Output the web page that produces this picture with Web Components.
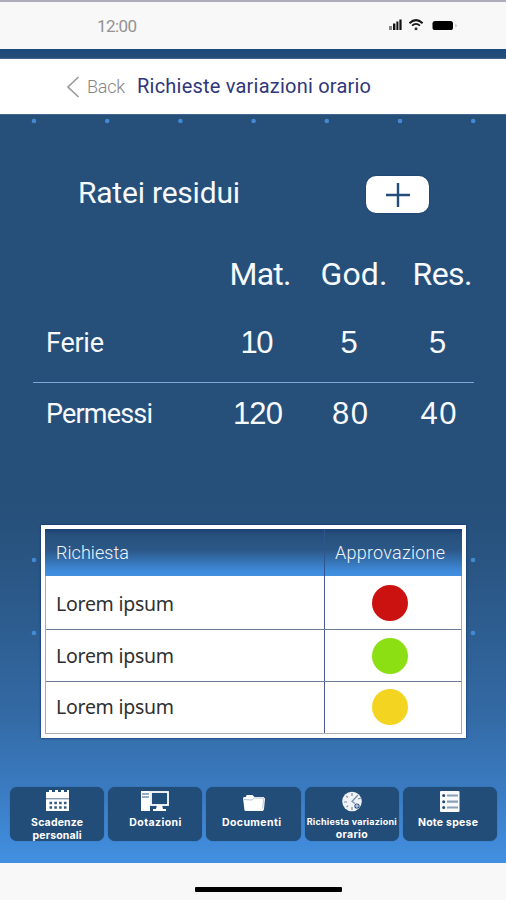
<!DOCTYPE html>
<html lang="it">
<head>
<meta charset="utf-8">
<title>Richieste variazioni orario</title>
<style>
html,body{margin:0;padding:0;width:506px;height:900px;overflow:hidden;background:#f8f8f8}
</style>
</head>
<body>
<hr-app></hr-app>
<script>
const define = (name, html, setup) => customElements.define(name, class extends HTMLElement {
  connectedCallback() {
    if (this.shadowRoot) return;
    const t = document.createElement('template');
    t.innerHTML = html;
    this.attachShadow({mode: 'open'}).appendChild(t.content.cloneNode(true));
    if (setup) setup(this, this.shadowRoot);
  }
});

// Text whose tracking is adjusted so that it spans the width given in "w".
define('fit-text', `
<style>:host{display:block;width:max-content;white-space:nowrap}span{display:inline-block}</style>
<span><slot></slot></span>`, (el, root) => {
  const span = root.querySelector('span');
  const w = Number(el.getAttribute('w'));
  const nodes = root.querySelector('slot').assignedNodes({flatten: true});
  const n = nodes.map(x => x.textContent).join('').length;
  const natural = span.getBoundingClientRect().width;
  const gap = (w - natural) / Math.max(1, n - 1);
  if (n < 2) return;
  span.style.letterSpacing = gap + 'px';
  span.style.marginRight = -gap + 'px';
});

define('status-bar', `
<style>
:host{display:flex;box-sizing:border-box;height:49px;padding:0 48px 0 97px;border-top:2px solid #aeacb8;background:#f8f8f8;justify-content:space-between;align-items:center;color:#929292;font:17px/20px Roboto,sans-serif}
svg{display:block}
</style>
<fit-text w="40">12:00</fit-text>
<svg width="70" height="14" viewBox="0 0 70 14">
<g fill="#111"><rect x="1" y="7" width="3" height="4" fill="#888"/><rect x="5" y="4.5" width="2.4" height="6.5"/><rect x="8.4" y="2.5" width="2" height="8.5"/><rect x="11.4" y="0.5" width="2.2" height="10.5"/></g>
<g fill="none" stroke="#161616"><path d="M21.5 4.2Q28 -2 34.6 4.2" stroke-width="2"/><path d="M24 6.7Q28 3 32 6.7" stroke-width="1.6"/></g>
<circle cx="28" cy="9.8" r="1.5" fill="#333"/>
<rect x="44.5" y="2" width="20.5" height="9" rx="2.6" fill="#000"/><path d="M67.5 4.7q2.3 1.8 0 3.6z" fill="#aaa"/>
</svg>`);

define('title-bar', `
<style>
:host{display:flex;box-sizing:border-box;height:55px;margin-top:10px;padding-left:66px;background:#fff;align-items:center;font:18px/24px Roboto,sans-serif;color:#a2a2a6;box-shadow:0 0 1px #d8e4f4}
svg{display:block;margin-right:7px;flex:none}
.back{font-weight:300;color:#858589;margin-right:12px}
.title{color:#2f377a;font-size:20px;margin-top:-1px}
</style>
<svg width="14" height="24" viewBox="0 0 14 24"><path d="M12.5 2L2 12L12.5 22" fill="none" stroke="#9c9ca0" stroke-width="1.7"/></svg>
<fit-text class="back" w="38">Back</fit-text>
<fit-text class="title" w="234">Richieste variazioni orario</fit-text>`);

define('add-button', `
<style>:host{display:flex;width:63px;height:37px;border-radius:10px;background:#fff;align-items:center;justify-content:center;box-shadow:0 0 1.5px #123263}svg{display:block}</style>
<svg width="24" height="24" viewBox="0 0 24 24"><path d="M0 12H24M12 0V24" stroke="#244c7b" stroke-width="2.4"/></svg>`);

define('balance-table', `
<style>
:host{display:block;padding:0 32px 0 33px;color:#f7faff}
.row{display:grid;grid-template-columns:176px 96px 88px 81px;align-items:center;height:62px;justify-items:center;font:31px/36px "Liberation Sans",sans-serif}
.row>:last-child{transform:translateX(4px)}
.row>:first-child{justify-self:start;padding-left:13px;font:27px/36px Roboto,sans-serif}
.head{height:62px;font:32px/36px Roboto,sans-serif}
.first{box-sizing:border-box;height:78px;padding-bottom:1px;border-bottom:1.5px solid #7fa8d6}
</style>
<div class="row head"><span></span><fit-text w="62" style="margin-left:7px">Mat.</fit-text><fit-text w="67" style="margin-left:10px">God.</fit-text><fit-text w="60" style="margin-left:10px">Res.</fit-text></div>
<div class="row first"><fit-text w="58">Ferie</fit-text><fit-text w="33">10</fit-text><fit-text w="18">5</fit-text><fit-text w="18">5</fit-text></div>
<div class="row"><fit-text w="107">Permessi</fit-text><fit-text w="50" style="margin-left:2px">120</fit-text><fit-text w="36" style="margin-left:2px">80</fit-text><fit-text w="36" style="margin-left:2px">40</fit-text></div>`);

define('request-row', `
<style>
:host{display:grid;grid-template-columns:279px 1fr;border-bottom:1px solid #6b7b98;height:51px;font:19.5px/26px "Noto Sans",sans-serif;color:#303030;box-sizing:content-box}
:host(:last-child){border-bottom-color:#aab0b6}
.n{display:flex;align-items:center;padding-left:10px;border-right:1px solid #4e5890}
.s{display:flex;align-items:center;justify-content:center;padding-right:7px}
i{display:block;width:36px;height:36px;border-radius:50%}
:host(:last-child) .s{padding-bottom:2px}
:host(:last-child) .n{padding-bottom:2px}
:host(:first-child) .n{padding-top:2px}
</style>
<div class="n"><fit-text w="118"><slot></slot></fit-text></div><div class="s"><i></i></div>`, (el, root) => {
  root.querySelector('i').style.background = el.getAttribute('color');
});

define('request-table', `
<style>
:host{display:block;box-sizing:border-box;width:425px;margin-left:41px;border:4px solid #fff;background:#fff;box-shadow:0 0 2px #07285f}
.head{display:grid;grid-template-columns:280px 1fr;height:47px;background:linear-gradient(#1c3f74 0,#27507c 12%,#2b5888 45%,#3f8bdb 90%,#428fe0);font:18px/24px Roboto,sans-serif;font-weight:300;color:#f0f5fc}
.head>*{display:flex;align-items:center;padding-left:11px}
.head>:first-child{border-right:1px solid #2c568d}
.body{border:solid #a3abb6;border-width:0 1px}
</style>
<div class="head"><div><fit-text w="73">Richiesta</fit-text></div><div style="padding-left:10px"><fit-text w="110">Approvazione</fit-text></div></div>
<div class="body">
<request-row color="#cc1111" style="height:53px">Lorem ipsum</request-row>
<request-row color="#8bdf12">Lorem ipsum</request-row>
<request-row color="#f3d521">Lorem ipsum</request-row>
</div>`);

define('nav-item', `
<style>
:host{display:flex;flex-direction:column;align-items:center;flex:1;height:54px;border-radius:7px;background:#234d79;color:#fff;font:700 10.5px/13px Inter,sans-serif;box-shadow:0 0 1px #1f4e82}
.i{display:block;height:29px}
</style>
<slot name="icon" class="i"></slot><slot></slot>`);

define('bottom-nav', `
<style>
:host{display:flex;gap:4px;padding:0 9px 0 10px}
svg{display:block;height:29px}
</style>
<nav-item><svg slot="icon" width="26" height="29" viewBox="0 0 26 29"><path d="M2 5h3V3h3v2h3V3h3v2h3V3h3v2h3v-2h2v21H2z" fill="#fff"/><path d="M2 11.8h23" stroke="#557396"/><path d="M5.5 16h18M5.5 20.5h18" stroke="#345a82" stroke-width="2.6" stroke-dasharray="2.6 2.2"/></svg><fit-text w="52">Scadenze</fit-text><fit-text w="49">personali</fit-text></nav-item>
<nav-item><svg slot="icon" width="30" height="29" viewBox="0 0 30 29"><path d="M1 4h9v20H1z" fill="#fff"/><path d="M2 7h7M2 10h7" stroke="#345a82"/><rect x="11" y="5" width="17" height="13" fill="#234d79" stroke="#fff" stroke-width="1.8"/><path d="M17 18h5l1 4h3v2H13v-2h3z" fill="#fff"/></svg><fit-text w="52">Dotazioni</fit-text></nav-item>
<nav-item><svg slot="icon" width="26" height="29" viewBox="0 0 26 29"><path d="M3.5 23.5L2 11l1-1h2l.5-2h6l2 2h9l1.500 1.500L23 22l-1 2H5z" fill="#fff"/><path d="M3 12.500l8 .5 2.500-2H22l.5 1.500-.8 9" fill="none" stroke="#a4b4c8" stroke-width=".8"/></svg><fit-text w="59" style="margin-right:4px">Documenti</fit-text></nav-item>
<nav-item><svg slot="icon" width="24" height="29" viewBox="0 0 24 29"><circle cx="12" cy="14.5" r="9.8" fill="#f0f3f6"/><path d="M12 6v3M4 15h3M12 20v3M6.3 9l1.5 1.5M18 8l-6 6.5 3 2M6.5 20l1.5-1.4M18 12l3-1" fill="none" stroke="#788fa9" stroke-width="1.2"/><circle cx="17" cy="19" r="2.6" fill="#234d79"/><path d="M17 17v4M15 19h4" stroke="#fff" stroke-width=".8"/></svg><fit-text w="90" style="font-size:9px;line-height:12.5px">Richiesta variazioni</fit-text><fit-text w="32" style="line-height:12px">orario</fit-text></nav-item>
<nav-item><svg slot="icon" width="20" height="29" viewBox="0 0 20 29"><rect x="0" y="4" width="19.5" height="21" rx="1" fill="#f7f9fb"/><path d="M7 8.500h11M7 14.700h11M7 20.500h11" stroke="#8c9fb7" stroke-width="2.200"/><circle cx="3.700" cy="8.500" r="1.500" fill="#234d79"/><circle cx="3.700" cy="14.700" r="1.500" fill="#234d79"/><circle cx="3.700" cy="20.500" r="1.500" fill="#234d79"/></svg><fit-text w="60" style="margin-right:4px">Note spese</fit-text></nav-item>`);

define('hr-app', `
<style>
:host{display:flex;flex-direction:column;width:506px;height:900px;background:linear-gradient(#1d4a7a 49px,#264f79 60px,#264f79 500px,#2a5786 580px,#3369a3 710px,#3a7bc1 790px,#4290e1 863px);position:relative}
.deco{position:absolute;inset:0}
.deco circle{fill:#4389d3}
status-bar,title-bar,.sum,balance-table,request-table,bottom-nav,.home{position:relative;flex:none}
.sum{display:flex;justify-content:space-between;align-items:center;padding:0 77px 0 78px;margin-top:62px;height:37px;color:#f7faff;font:30px/36px Roboto,sans-serif}
.sum fit-text{margin-top:-3px}
balance-table{margin-top:30px}
request-table{margin-top:80px}
bottom-nav{margin-top:49px}
.home{margin-top:auto;height:37px;background:#f8f8f8;display:flex;justify-content:center;padding-left:30px;box-sizing:border-box}
.home i{width:147px;height:5px;background:#000;margin-top:24px;border-radius:1px}
</style>
<svg class="deco" width="506" height="900"></svg>
<status-bar></status-bar>
<title-bar></title-bar>
<div class="sum"><fit-text w="162">Ratei residui</fit-text><add-button></add-button></div>
<balance-table></balance-table>
<request-table></request-table>
<bottom-nav></bottom-nav>
<div class="home"><i></i></div>`, (el, root) => {
  const dots = [];
  for (let i = 0; i < 7; i++) dots.push([34 + i * 73.2, 121]);
  for (const x of [34, 473]) for (const y of [560, 633]) dots.push([x, y]);
  root.querySelector('.deco').innerHTML = dots.map(([x, y]) => `<circle cx="${x}" cy="${y}" r="2.3"/>`).join('');
});
</script>
</body>
</html>
